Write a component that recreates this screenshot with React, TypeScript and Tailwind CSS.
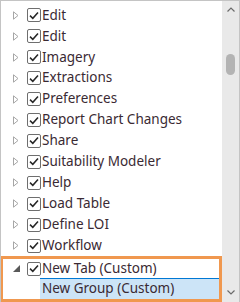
const items = [
  "Edit",
  "Edit",
  "Imagery",
  "Extractions",
  "Preferences",
  "Report Chart Changes",
  "Share",
  "Suitability Modeler",
  "Help",
  "Load Table",
  "Define LOI",
  "Workflow",
];

function Check() {
  return (
    <span className="flex h-[14px] w-[14px] shrink-0 items-center justify-center rounded-[2px] border border-[#6e6e6e] bg-white">
      <svg width="10" height="9" viewBox="0 0 10 9">
        <path d="M1 4.6 L3.8 7.3 L9 1.4" fill="none" stroke="#262626" strokeWidth="1.5" />
      </svg>
    </span>
  );
}

function Collapsed() {
  return (
    <svg width="6" height="9" viewBox="0 0 6 9" className="shrink-0">
      <path d="M0.5 0.8 L5 4.5 L0.5 8.2 Z" fill="none" stroke="#a6a6a6" strokeWidth="1" />
    </svg>
  );
}

function Expanded() {
  return (
    <svg width="7" height="7" viewBox="0 0 7 7" className="shrink-0">
      <path d="M7 0 L7 7 L0 7 Z" fill="#595959" />
    </svg>
  );
}

export default function App() {
  return (
    <div className="flex h-[302px] w-[240px] overflow-hidden border-l border-t border-[#c4c4c4] bg-white font-['Noto_Sans','Open_Sans',sans-serif] text-[13.5px] text-[#3a2a33]">
      {/* tree */}
      <div className="flex w-[221px] flex-col pt-[4px]">
        {items.map((t, i) => (
          <div key={i} className="flex h-[21px] items-center">
            <span className="flex w-[26px] justify-center pl-[4px]">
              <Collapsed />
            </span>
            <Check />
            <span className="ml-px whitespace-nowrap leading-none">{t}</span>
          </div>
        ))}
        <div className="-ml-px flex flex-col border-[3px] border-[#f0984f]">
          <div className="flex h-[19px] items-center">
            <span className="flex w-[24px] justify-center pl-[2px]">
              <Expanded />
            </span>
            <Check />
            <span className="ml-px whitespace-nowrap leading-none">New Tab (Custom)</span>
          </div>
          <div className="ml-[37px] flex h-[21px] items-center border-t border-[#0078d4] bg-[#cce4f7] pl-[2px]">
            <span className="whitespace-nowrap leading-none">New Group (Custom)</span>
          </div>
        </div>
      </div>
      {/* scrollbar */}
      <div className="flex w-[18px] flex-col items-center border-r border-[#c4c4c4] bg-[#e9e9e9]">
        <svg width="8" height="5" viewBox="0 0 8 5" className="mt-[6px]">
          <path d="M0.5 4.5 L4 1 L7.5 4.5" fill="none" stroke="#6b6b6b" strokeWidth="1.2" />
        </svg>
        <div className="mt-[42px] h-[21px] w-[9px] rounded-full bg-[#b3b3b3]" />
        <div className="flex-1" />
        <svg width="8" height="5" viewBox="0 0 8 5" className="mb-[7px]">
          <path d="M0.5 0.5 L4 4 L7.5 0.5" fill="none" stroke="#6b6b6b" strokeWidth="1.2" />
        </svg>
      </div>
    </div>
  );
}
